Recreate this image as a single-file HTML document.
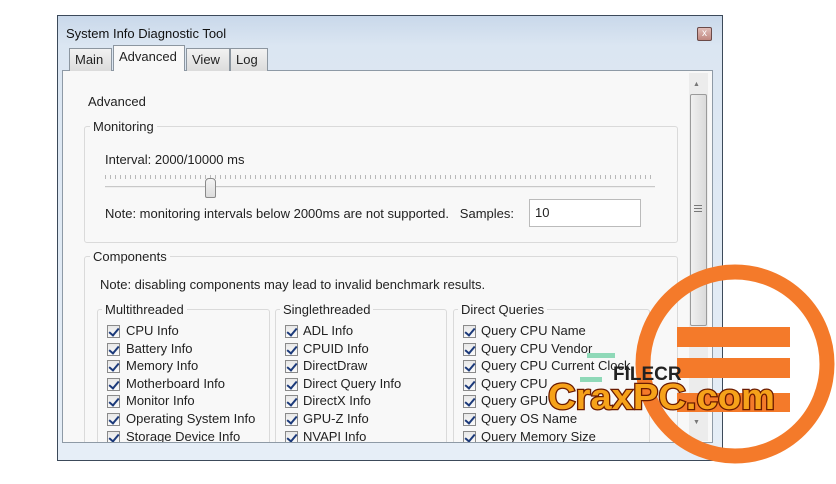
<!DOCTYPE html>
<html><head><meta charset="utf-8">
<style>
*{margin:0;padding:0;box-sizing:border-box}
html,body{width:836px;height:484px;overflow:hidden}
body{background:#fff;position:relative;font-family:"Liberation Sans",sans-serif;font-size:13px;color:#222}
.a{position:absolute;white-space:nowrap}
.win{position:absolute;left:57px;top:15px;width:666px;height:446px;border:1px solid #3c4a5a;background:linear-gradient(#c9d8ea,#dbe6f2 30px,#e6eef7);}
.panel{position:absolute;left:62px;top:70px;width:651px;height:373px;background:#f8f8f8;border:1px solid #8e9aa6;overflow:hidden}
.tab{position:absolute;top:48px;height:23px;border:1px solid #8c96a0;border-bottom:none;background:linear-gradient(#f2f2f2,#dcdcdc);padding:3px 5px 0;font-size:13px}
.gb{position:absolute;border:1px solid #dadada;border-radius:3px}
.gl{position:absolute;background:#f8f8f8;padding:0 3px;font-size:13px}
.cb{position:absolute;width:13px;height:13px;border:1px solid #8a8a8a;background:linear-gradient(#e8e8e8,#fafafa)}
.cb:after{content:"";position:absolute;left:3px;top:0px;width:4px;height:8px;border:solid #1c3a7a;border-width:0 2px 2px 0;transform:rotate(40deg)}
.t{position:absolute;font-size:13px}
</style></head><body>
<div class="win"></div>
<div class="a" style="left:66px;top:26px;font-size:13px;color:#111">System Info Diagnostic Tool</div>
<div class="a" style="left:697px;top:27px;width:15px;height:14px;border:1px solid #6a4a48;border-radius:2px;background:linear-gradient(#e0bdb8,#c08880);color:#fff;font-size:10px;text-align:center;line-height:12px">x</div>
<div class="panel">
 <div class="a" style="left:25px;top:23px;font-size:13px">Advanced</div>
 <div class="gb" style="left:21px;top:55px;width:594px;height:117px"></div>
 <div class="gl" style="left:27px;top:48px">Monitoring</div>
 <div class="a" style="left:42px;top:81px;font-size:13px">Interval: 2000/10000 ms</div>
 <div class="a" style="left:42px;top:104px;width:550px;height:4px;background:repeating-linear-gradient(90deg,#b8b8b8 0 1px,transparent 1px 5px)"></div>
 <div class="a" style="left:42px;top:115px;width:550px;height:2px;background:#c8c8c8;border-bottom:1px solid #eee"></div>
 <div class="a" style="left:142px;top:107px;width:11px;height:20px;border:1px solid #8a8a8a;border-radius:4px 4px 2px 2px;background:linear-gradient(#f4f4f4,#dcdcdc)"></div>
 <div class="a" style="left:42px;top:135px;font-size:13px">Note: monitoring intervals below 2000ms are not supported.&nbsp;&nbsp; Samples:</div>
 <div class="a" style="left:466px;top:128px;width:112px;height:28px;border:1px solid #bbb;background:#fff;padding:5px 5px;font-size:13px">10</div>
 <div class="gb" style="left:21px;top:185px;width:594px;height:220px"></div>
 <div class="gl" style="left:27px;top:178px">Components</div>
 <div class="a" style="left:37px;top:206px;font-size:13px">Note: disabling components may lead to invalid benchmark results.</div>
 <div class="gb" style="left:34px;top:238px;width:173px;height:200px"></div>
 <div class="gl" style="left:39px;top:231px">Multithreaded</div>
 <div class="gb" style="left:212px;top:238px;width:172px;height:200px"></div>
 <div class="gl" style="left:217px;top:231px">Singlethreaded</div>
 <div class="gb" style="left:390px;top:238px;width:197px;height:200px"></div>
 <div class="gl" style="left:395px;top:231px">Direct Queries</div>
 <div id="rows"></div>
 <div class="a" style="left:626px;top:2px;width:19px;height:368px;background:#ececec"></div>
 <div class="a" style="left:630px;top:10px;color:#777;font-size:7px">▲</div>
 <div class="a" style="left:630px;top:348px;color:#777;font-size:7px">▼</div>
 <div class="a" style="left:627px;top:23px;width:17px;height:232px;border:1px solid #9a9a9a;border-radius:2px;background:linear-gradient(90deg,#f0f0f0,#dadada)"></div>
 <div class="a" style="left:631px;top:134px;width:8px;height:8px;background:repeating-linear-gradient(#777 0 1px,transparent 1px 3px)"></div>
</div>
<div class="tab" style="left:69px;width:43px">Main</div>
<div class="tab" style="left:113px;top:45px;height:26px;width:72px;background:#f8f8f8;z-index:2">Advanced</div>
<div class="tab" style="left:186px;width:44px">View</div>
<div class="tab" style="left:230px;width:38px">Log</div>
<svg class="a" style="left:0;top:0" width="836" height="484">
<circle cx="735" cy="364" r="92" fill="none" stroke="#f47a2a" stroke-width="15"/>
<rect x="677" y="327" width="113" height="20" fill="#f47a2a"/>
<rect x="677" y="358" width="113" height="20" fill="#f47a2a"/>
<rect x="677" y="393" width="113" height="19" fill="#f47a2a"/>
<rect x="587" y="353" width="28" height="5" fill="#8fd9b8"/>
<rect x="580" y="377" width="22" height="5" fill="#8fd9b8"/>
<text x="613" y="380" font-family="Liberation Sans" font-size="19" fill="#222" font-weight="600">FILECR</text>
<text x="548" y="409" font-family="Liberation Sans" font-weight="bold" font-size="36" textLength="227" lengthAdjust="spacingAndGlyphs" fill="#f6a21a" stroke="#6a1a00" stroke-width="2.5" paint-order="stroke">CraxPC.com</text>
</svg>
<script>
var cols=[[44,63,["CPU Info","Battery Info","Memory Info","Motherboard Info","Monitor Info","Operating System Info","Storage Device Info"]],
[222,240,["ADL Info","CPUID Info","DirectDraw","Direct Query Info","DirectX Info","GPU-Z Info","NVAPI Info"]],
[400,418,["Query CPU Name","Query CPU Vendor","Query CPU Current Clock","Query CPU","Query GPU","Query OS Name","Query Memory Size"]]];
var h="";cols.forEach(function(c){c[2].forEach(function(s,i){var y=254+i*17.6;
h+='<div class="cb" style="left:'+c[0]+'px;top:'+y+'px"></div><div class="t" style="left:'+c[1]+'px;top:'+(y-2)+'px">'+s+'</div>';});});
document.getElementById("rows").innerHTML=h;
</script>
</body></html>
